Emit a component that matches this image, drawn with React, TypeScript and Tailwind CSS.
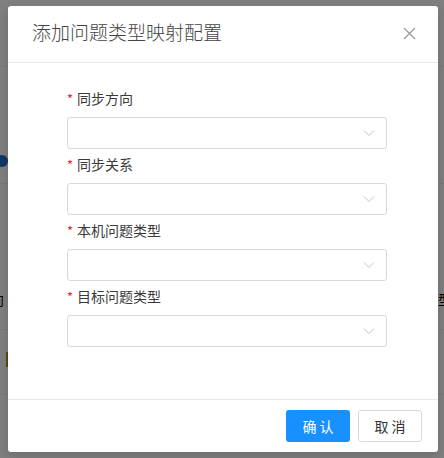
import React from 'react';

const font = { fontFamily: '"Noto Sans CJK SC", "Noto Sans", sans-serif' };

function Chevron() {
  return (
    <svg width="12" height="8" viewBox="0 0 12 8" fill="none" className="shrink-0">
      <path d="M1 1.5 L6 6.5 L11 1.5" stroke="#c4c4c4" strokeWidth="1" />
    </svg>
  );
}

function Field({ label, last }: { label: string; last?: boolean }) {
  return (
    <div className={last ? '' : 'mb-[5px]'}>
      <div className="flex items-center h-[21px] mb-2 text-sm leading-[21px] text-[#3a3a3a]">
        <span className="text-[#f5222d] mr-1 text-[13px]">*</span>
        <span>{label}</span>
      </div>
      <div className="h-[32px] w-[320px] rounded-[3px] border border-[#d9d9d9] bg-white flex items-center justify-end pr-[11px]">
        <Chevron />
      </div>
    </div>
  );
}

export default function App() {
  return (
    <div className="relative w-[444px] h-[458px] overflow-hidden bg-white" style={font}>
      {/* page behind the dialog */}
      <div className="flex flex-col">
        <div className="h-[67px] border-b border-[#eeeeee]" />
        <div className="h-[117px] border-b border-[#eeeeee] flex items-end pb-[16px]">
          <span className="ml-[-4px] w-[12px] h-[12px] rounded-full bg-[#1f6fd0]" />
        </div>
        <div className="h-[146px] border-b border-[#eeeeee] flex items-end justify-between pb-[20px] text-sm text-black">
          <span className="ml-[-10px]">向</span>
          <span className="mr-[-8px]">型</span>
        </div>
        <div className="h-[65px] border-b border-[#eeeeee] flex items-start pt-[22px]">
          <span className="ml-[6px] w-[3px] h-[15px] bg-[#c08a2a]" />
        </div>
      </div>

      <div className="absolute inset-0 bg-black/50" />

      {/* dialog */}
      <div className="absolute left-[8px] top-[6px] w-[430px] bg-white rounded-[3px] shadow-[0_4px_12px_rgba(0,0,0,0.15)] flex flex-col">
        <div className="h-[57px] border-b border-[#e8e8e8] flex items-center justify-between pl-6 pr-[22px]">
          <span className="text-[19px] font-light text-[#444] leading-none -mt-[5px]">添加问题类型映射配置</span>
          <svg width="13" height="13" viewBox="0 0 13 13" className="-mt-[1px]">
            <path d="M1 1 L12 12 M12 1 L1 12" stroke="#999999" strokeWidth="1.3" />
          </svg>
        </div>
        <div className="pt-[25px] pb-[52px] pl-[59px]">
          <Field label="同步方向" />
          <Field label="同步关系" />
          <Field label="本机问题类型" />
          <Field label="目标问题类型" last />
        </div>
        <div className="border-t border-[#e8e8e8] flex justify-end gap-2 px-4 py-[10px]">
          <button className="w-[64px] h-[32px] rounded-[3px] bg-[#1890ff] text-white text-sm">确 认</button>
          <button className="w-[64px] h-[32px] rounded-[3px] border border-[#d9d9d9] bg-white text-[#333] text-sm">取 消</button>
        </div>
      </div>
    </div>
  );
}
